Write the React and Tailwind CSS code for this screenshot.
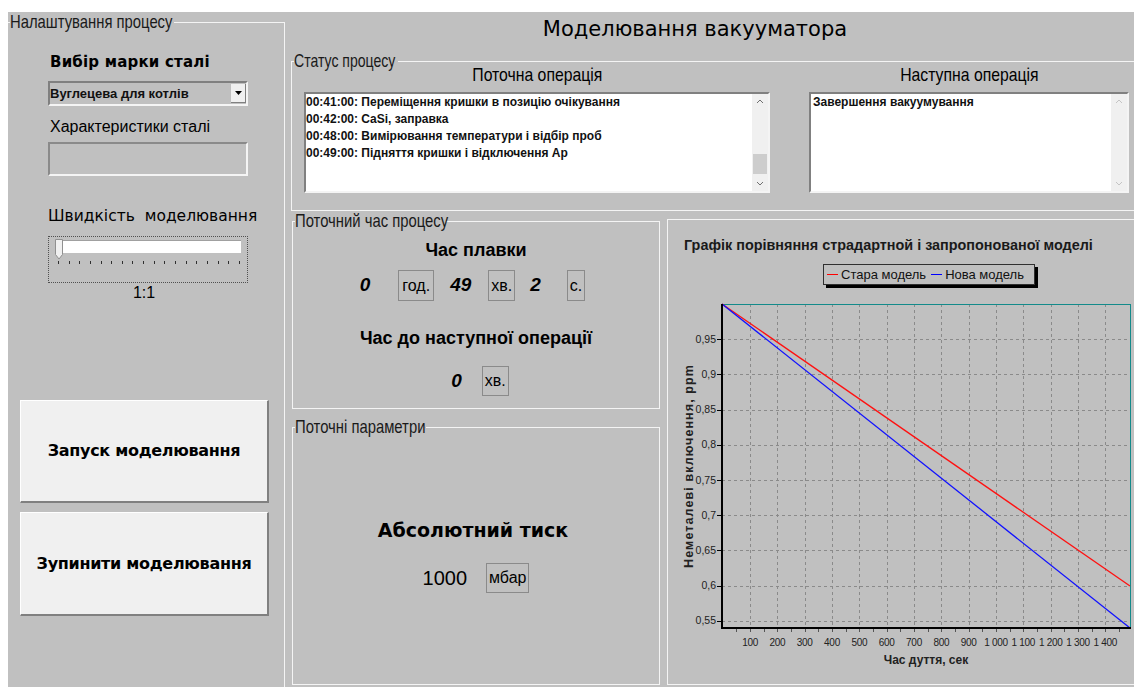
import React from "react";

const ARIAL = "font-['Liberation_Sans',Arial,sans-serif]";
const DEJAVU = "font-['DejaVu_Sans',Tahoma,sans-serif]";

const log = [
  "00:41:00: Переміщення кришки в позицію очікування",
  "00:42:00: CaSi, заправка",
  "00:48:00: Вимірювання температури і відбір проб",
  "00:49:00: Підняття кришки і відключення Ар",
];

function Narrow({ children, scale = "scale-x-[0.78]", className = "" }) {
  return <span className={`inline-block whitespace-nowrap ${scale} ${className}`}>{children}</span>;
}

function GroupBox({ title, legendW = "", scale, className = "", children }) {
  return (
    <fieldset className={`border border-[#f4f4f4] ${className}`}>
      {title && (
        <legend
          className={`ml-[2px] h-[20px] overflow-visible text-[19px] leading-[20px] text-[#1a1a1a] ${ARIAL} ${legendW}`}
        >
          <Narrow scale={scale} className="origin-left">
            {title}
          </Narrow>
        </legend>
      )}
      {children}
    </fieldset>
  );
}

function Chevron({ up, color }) {
  return (
    <svg width="8" height="5" viewBox="0 0 8 5">
      <polyline
        points={up ? "1,4 4,1 7,4" : "1,1 4,4 7,1"}
        fill="none"
        stroke={color}
        strokeWidth="1"
      />
    </svg>
  );
}

function ListBox({ lines, active, className = "" }) {
  return (
    <div
      className={`flex bg-white border-2 border-t-[#808080] border-l-[#808080] border-r-[#f4f4f4] border-b-[#f4f4f4] ${className}`}
    >
      <div className={`flex-1 text-[12px] font-bold leading-[17px] text-[#111] ${ARIAL}`}>
        {lines.map((l) => (
          <div key={l} className="whitespace-nowrap">
            {l}
          </div>
        ))}
      </div>
      <div className="w-[16px] bg-[#f0f0f0] flex flex-col items-center justify-between py-[5px]">
        <Chevron up color={active ? "#707070" : "#c4c4c4"} />
        {active && <div className="w-[14px] h-[20px] bg-[#cdcdcd] mt-[43px]" />}
        <Chevron color={active ? "#707070" : "#c4c4c4"} />
      </div>
    </div>
  );
}

function Unit({ children, className = "" }) {
  return (
    <div
      className={`border border-[#8a8a8a] px-[2px] flex items-center text-[16px] text-black ${ARIAL} ${className}`}
    >
      {children}
    </div>
  );
}

function Num({ children, className = "" }) {
  return (
    <span className={`text-[19px] font-bold italic text-black ${ARIAL} ${className}`}>{children}</span>
  );
}

// plot geometry, in svg coords
const PL = 54;
const PT = 14;
const PR = 462;
const PB = 338;
const xOf = (t) => 54.7 + t * 0.2733;
const yOf = (v) => 14 + (1 - v) * 704;
const yTicks = [0.95, 0.9, 0.85, 0.8, 0.75, 0.7, 0.65, 0.6, 0.55];
const xTicks = [100, 200, 300, 400, 500, 600, 700, 800, 900, 1000, 1100, 1200, 1300, 1400];
const fmtX = (t) => (t >= 1000 ? `1 ${String(t - 1000).padStart(3, "0")}` : String(t));
const fmtY = (v) => String(v).replace(".", ",");

function Plot() {
  const minor = [];
  for (let t = 50; t < 1490; t += 50) minor.push(t);
  return (
    <svg width="467" height="394" className="block" fontFamily="'Liberation Sans', Arial, sans-serif">
      {xTicks.map((t) => (
        <line
          key={`gx${t}`}
          x1={Math.round(xOf(t)) + 0.5}
          x2={Math.round(xOf(t)) + 0.5}
          y1={PT}
          y2={PB}
          stroke="#8a8a8a"
          strokeDasharray="3 3"
          shapeRendering="crispEdges"
        />
      ))}
      {yTicks.map((v) => (
        <line
          key={`gy${v}`}
          x1={PL}
          x2={PR}
          y1={Math.round(yOf(v)) + 0.5}
          y2={Math.round(yOf(v)) + 0.5}
          stroke="#8a8a8a"
          strokeDasharray="3 3"
          shapeRendering="crispEdges"
        />
      ))}
      <line x1={PL} x2={PR} y1={PT + 0.5} y2={PT + 0.5} stroke="#138a8a" shapeRendering="crispEdges" />
      <line x1={PR + 0.5} x2={PR + 0.5} y1={PT} y2={PB} stroke="#138a8a" shapeRendering="crispEdges" />
      <line x1={PL} y1={PT} x2={PR} y2={296} stroke="#ff1010" strokeWidth="1.3" />
      <line x1={PL} y1={PT} x2={PR} y2={PB} stroke="#1010ff" strokeWidth="1.3" />
      <line x1={PL} x2={PL} y1={PT} y2={PB + 1} stroke="#000" strokeWidth="2" shapeRendering="crispEdges" />
      <line x1={PL - 1} x2={PR + 1} y1={PB} y2={PB} stroke="#000" strokeWidth="2" shapeRendering="crispEdges" />
      {yTicks.map((v) => (
        <g key={`ly${v}`}>
          <line
            x1={PL - 5}
            x2={PL}
            y1={Math.round(yOf(v)) + 0.5}
            y2={Math.round(yOf(v)) + 0.5}
            stroke="#000"
            shapeRendering="crispEdges"
          />
          <text x={PL - 6} y={yOf(v) + 3.5} fontSize="10.5" textAnchor="end" fill="#222">
            {fmtY(v)}
          </text>
        </g>
      ))}
      {minor.map((t) => (
        <line
          key={`mt${t}`}
          x1={Math.round(xOf(t)) + 0.5}
          x2={Math.round(xOf(t)) + 0.5}
          y1={PB + 1}
          y2={PB + 4}
          stroke="#555"
          shapeRendering="crispEdges"
        />
      ))}
      {xTicks.map((t) => (
        <text
          key={`lx${t}`}
          x={xOf(t)}
          y={356}
          fontSize="10"
          letterSpacing="-0.3"
          textAnchor="middle"
          fill="#222"
        >
          {fmtX(t)}
        </text>
      ))}
      <text x={258} y={374} fontSize="12" fontWeight="bold" textAnchor="middle" fill="#222">
        Час дуття, сек
      </text>
      <text
        x={0}
        y={0}
        fontSize="12.5"
        fontWeight="bold"
        letterSpacing="1.1"
        textAnchor="middle"
        fill="#222"
        transform="translate(25 176) rotate(-90)"
      >
        Неметалеві включення, ppm
      </text>
    </svg>
  );
}

export default function App() {
  return (
    <div className="w-[1134px] h-[687px] overflow-hidden bg-white pt-[12px] pl-[8px]">
      <div className="flex h-[700px] bg-[#c0c0c0]">
        {/* left settings panel */}
        <GroupBox
          title="Налаштування процесу"
          legendW="w-[164px]"
          className="w-[276px] h-[700px] shrink-0 border-l-0"
        >
          <div className="pl-[40px] w-[276px]">
            <div
              className={`mt-[20px] ml-[2px] h-[20px] leading-[20px] text-[15px] tracking-[0.2px] font-bold text-black whitespace-nowrap ${DEJAVU}`}
            >
              Вибір марки сталі
            </div>
            <div className="mt-[9px] h-[25px] w-[200px] flex items-center justify-between border-2 border-t-[#808080] border-l-[#808080] border-r-[#f4f4f4] border-b-[#f4f4f4]">
              <span className={`text-[13px] font-bold text-[#111] ${ARIAL}`}>Вуглецева для котлів</span>
              <div className="w-[15px] h-[19px] bg-[#f0f0f0] border-r border-b border-r-[#808080] border-b-[#808080] flex items-center justify-center">
                <svg width="7" height="4" viewBox="0 0 7 4">
                  <polygon points="0,0 7,0 3.5,4" fill="#000" />
                </svg>
              </div>
            </div>
            <div className={`mt-[11px] ml-[2px] h-[20px] leading-[20px] text-[16px] text-black ${ARIAL}`}>
              Характеристики сталі
            </div>
            <div className="mt-[5px] h-[34px] w-[200px] border-2 border-t-[#8a8a8a] border-l-[#8a8a8a] border-r-[#f4f4f4] border-b-[#f4f4f4]" />
            <div
              className={`mt-[30px] h-[20px] leading-[20px] text-[15.5px] text-black whitespace-nowrap ${DEJAVU}`}
            >
              Швидкість&nbsp; моделювання
            </div>
            <div className="relative mt-[10px] h-[47px] w-[200px] border border-dotted border-[#505050]">
              <div className="ml-[8px] mt-[3px] h-[13px] w-[184px] bg-white border-t border-l border-t-[#a0a0a0] border-l-[#a0a0a0]" />
              <div className="ml-[9px] mt-[8px] w-[182px] flex justify-between">
                {Array.from({ length: 18 }, (_, i) => (
                  <div key={i} className="w-px h-[3px] bg-[#303030]" />
                ))}
              </div>
              <svg width="8" height="21" viewBox="0 0 8 21" className="absolute left-[6px] top-[2px]">
                <path d="M0.5 0.5 H7.5 V15.5 L4 20 L0.5 15.5 Z" fill="#f0f0f0" stroke="#909090" />
              </svg>
            </div>
            <div className={`w-[192px] h-[20px] leading-[20px] text-center text-[16px] text-black ${ARIAL}`}>1:1</div>
          </div>
          <div className="pl-[12px]">
            <button
              className={`mt-[97px] w-[249px] h-[103px] bg-[#f0f0f0] border-t border-l border-r-2 border-b-2 border-t-white border-l-white border-r-[#808080] border-b-[#808080] text-[16px] tracking-[-0.3px] font-bold text-black ${DEJAVU}`}
            >
              Запуск моделювання
            </button>
            <button
              className={`block mt-[9px] w-[249px] h-[104px] bg-[#f0f0f0] border-t border-l border-r-2 border-b-2 border-t-white border-l-white border-r-[#808080] border-b-[#808080] text-[16px] tracking-[-0.3px] font-bold text-black ${DEJAVU}`}
            >
              Зупинити моделювання
            </button>
          </div>
        </GroupBox>

        {/* right side */}
        <div className="flex flex-col w-[850px] shrink-0">
          <div className={`mt-[3px] w-[820px] h-[28px] leading-[28px] text-center text-[21px] text-black ${DEJAVU}`}>
            Моделювання вакууматора
          </div>

          <GroupBox
            title="Статус процесу"
            legendW="w-[104px]"
            scale="scale-x-[0.74]"
            className="mt-[8px] ml-[6px] w-[850px] shrink-0 pb-[17px]"
          >
            <div className="flex pl-[12px]">
              <div className="w-[466px]">
                <div className={`-mt-[6px] h-[20px] leading-[20px] text-center text-[19px] text-black ${ARIAL}`}>
                  <Narrow scale="scale-x-[0.83]">Поточна операція</Narrow>
                </div>
                <ListBox lines={log} active className="mt-[7px] h-[101px]" />
              </div>
              <div className="w-[320px] ml-[39px]">
                <div className={`-mt-[6px] h-[20px] leading-[20px] text-center text-[19px] text-black ${ARIAL}`}>
                  <Narrow scale="scale-x-[0.83]">Наступна операція</Narrow>
                </div>
                <ListBox lines={["Завершення вакуумування"]} className="mt-[7px] h-[101px] pl-[2px]" />
              </div>
            </div>
          </GroupBox>

          <div className="flex">
            <div className="ml-[7px] w-[368px] shrink-0 flex flex-col">
              <GroupBox title="Поточний час процесу" legendW="w-[151px]" className="h-[198px]">
                <div className={`mt-[9px] h-[20px] leading-[20px] text-center text-[18px] font-bold text-black ${ARIAL}`}>
                  Час плавки
                </div>
                <div className="mt-[10px] h-[31px] flex items-center justify-center pr-[7px]">
                  <Num>0</Num>
                  <Unit className="ml-[28px] h-[31px] px-[3px]">год.</Unit>
                  <Num className="ml-[16px]">49</Num>
                  <Unit className="ml-[17px] h-[31px]">хв.</Unit>
                  <Num className="ml-[15px]">2</Num>
                  <Unit className="ml-[26px] h-[31px]">с.</Unit>
                </div>
                <div className={`mt-[27px] h-[20px] leading-[20px] text-center text-[18px] font-bold text-black ${ARIAL}`}>
                  Час до наступної операції
                </div>
                <div className="mt-[18px] h-[30px] flex items-center justify-center pl-[8px]">
                  <Num>0</Num>
                  <Unit className="ml-[20px] h-[30px]">хв.</Unit>
                </div>
              </GroupBox>
              <GroupBox
                title="Поточні параметри"
                legendW="w-[131px]"
                className="mt-[8px] h-[268px]"
              >
                <div
                  className={`mt-[80px] h-[26px] leading-[26px] text-center text-[19px] font-bold text-black pr-[6px] ${DEJAVU}`}
                >
                  Абсолютний тиск
                </div>
                <div className="mt-[20px] flex items-center justify-center">
                  <span className={`text-[20px] text-black ${ARIAL}`}>1000</span>
                  <Unit className="ml-[19px] h-[30px]">мбар</Unit>
                </div>
              </GroupBox>
            </div>

            {/* chart */}
            <div className="ml-[7px] mt-[8px] w-[480px] h-[466px] shrink-0 border border-[#f4f4f4]">
              <div
                className={`mt-[16px] pl-[16px] h-[18px] leading-[18px] text-[14.4px] font-bold text-[#1a1a1a] whitespace-nowrap ${ARIAL}`}
              >
                Графік порівняння страдартной і запропонованої моделі
              </div>
              <div
                className={`mt-[10px] ml-[155px] w-[212px] h-[21px] border border-[#303030] shadow-[3px_3px_0_#000] flex items-center pl-[3px] text-[13px] text-[#111] ${ARIAL}`}
              >
                <span className="w-[11px] h-px bg-[#ff0000]" />
                <span className="ml-[3px]">Стара модель</span>
                <span className="ml-[5px] w-[11px] h-px bg-[#0000ff]" />
                <span className="ml-[3px]">Нова модель</span>
              </div>
              <div className="mt-[5px]">
                <Plot />
              </div>
            </div>
          </div>
        </div>
      </div>
    </div>
  );
}
